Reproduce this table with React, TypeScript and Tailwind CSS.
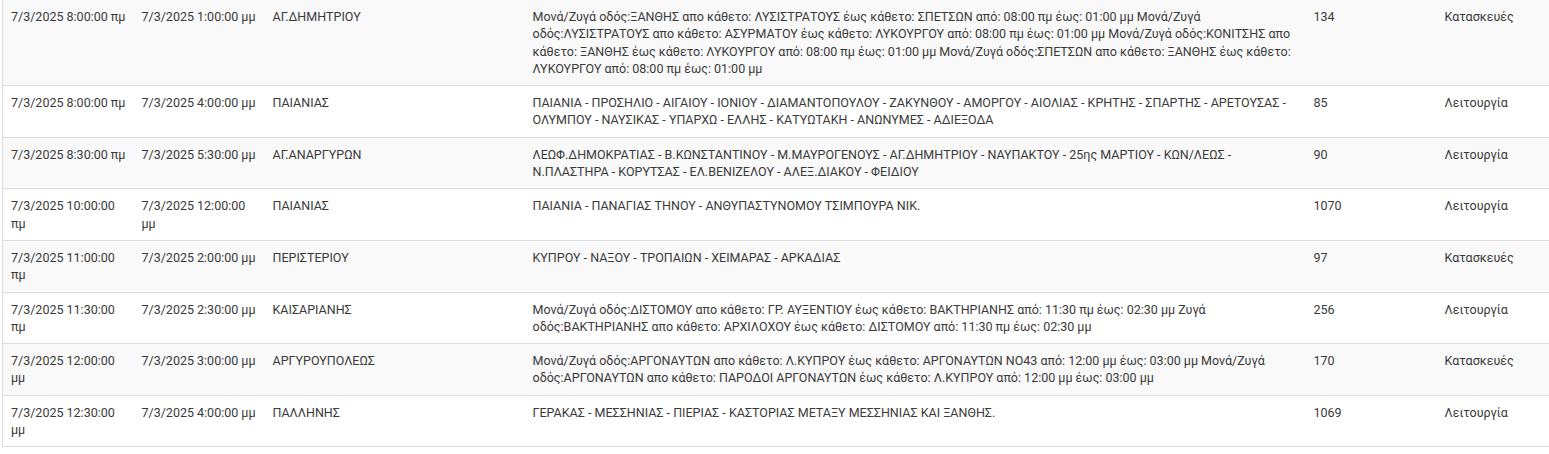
import React from 'react';

type Row = {
  start: string;
  end: string;
  area: string;
  streets: string;
  code: string;
  kind: string;
};

const rows: Row[] = [
  {
    start: '7/3/2025 8:00:00 πμ',
    end: '7/3/2025 1:00:00 μμ',
    area: 'ΑΓ.ΔΗΜΗΤΡΙΟΥ',
    streets:
      'Μονά/Ζυγά οδός:ΞΑΝΘΗΣ απο κάθετο: ΛΥΣΙΣΤΡΑΤΟΥΣ έως κάθετο: ΣΠΕΤΣΩΝ από: 08:00 πμ έως: 01:00 μμ Μονά/Ζυγά οδός:ΛΥΣΙΣΤΡΑΤΟΥΣ απο κάθετο: ΑΣΥΡΜΑΤΟΥ έως κάθετο: ΛΥΚΟΥΡΓΟΥ από: 08:00 πμ έως: 01:00 μμ Μονά/Ζυγά οδός:ΚΟΝΙΤΣΗΣ απο κάθετο: ΞΑΝΘΗΣ έως κάθετο: ΛΥΚΟΥΡΓΟΥ από: 08:00 πμ έως: 01:00 μμ Μονά/Ζυγά οδός:ΣΠΕΤΣΩΝ απο κάθετο: ΞΑΝΘΗΣ έως κάθετο: ΛΥΚΟΥΡΓΟΥ από: 08:00 πμ έως: 01:00 μμ',
    code: '134',
    kind: 'Κατασκευές',
  },
  {
    start: '7/3/2025 8:00:00 πμ',
    end: '7/3/2025 4:00:00 μμ',
    area: 'ΠΑΙΑΝΙΑΣ',
    streets:
      'ΠΑΙΑΝΙΑ - ΠΡΟΣΗΛΙΟ - ΑΙΓΑΙΟΥ - ΙΟΝΙΟΥ - ΔΙΑΜΑΝΤΟΠΟΥΛΟΥ - ΖΑΚΥΝΘΟΥ - ΑΜΟΡΓΟΥ - ΑΙΟΛΙΑΣ - ΚΡΗΤΗΣ - ΣΠΑΡΤΗΣ - ΑΡΕΤΟΥΣΑΣ - ΟΛΥΜΠΟΥ - ΝΑΥΣΙΚΑΣ - ΥΠΑΡΧΩ - ΕΛΛΗΣ - ΚΑΤΥΩΤΑΚΗ - ΑΝΩΝΥΜΕΣ - ΑΔΙΕΞΟΔΑ',
    code: '85',
    kind: 'Λειτουργία',
  },
  {
    start: '7/3/2025 8:30:00 πμ',
    end: '7/3/2025 5:30:00 μμ',
    area: 'ΑΓ.ΑΝΑΡΓΥΡΩΝ',
    streets:
      'ΛΕΩΦ.ΔΗΜΟΚΡΑΤΙΑΣ - Β.ΚΩΝΣΤΑΝΤΙΝΟΥ - Μ.ΜΑΥΡΟΓΕΝΟΥΣ - ΑΓ.ΔΗΜΗΤΡΙΟΥ - ΝΑΥΠΑΚΤΟΥ - 25ης ΜΑΡΤΙΟΥ - ΚΩΝ/ΛΕΩΣ - Ν.ΠΛΑΣΤΗΡΑ - ΚΟΡΥΤΣΑΣ - ΕΛ.ΒΕΝΙΖΕΛΟΥ - ΑΛΕΞ.ΔΙΑΚΟΥ - ΦΕΙΔΙΟΥ',
    code: '90',
    kind: 'Λειτουργία',
  },
  {
    start: '7/3/2025 10:00:00 πμ',
    end: '7/3/2025 12:00:00 μμ',
    area: 'ΠΑΙΑΝΙΑΣ',
    streets: 'ΠΑΙΑΝΙΑ - ΠΑΝΑΓΙΑΣ ΤΗΝΟΥ - ΑΝΘΥΠΑΣΤΥΝΟΜΟΥ ΤΣΙΜΠΟΥΡΑ ΝΙΚ.',
    code: '1070',
    kind: 'Λειτουργία',
  },
  {
    start: '7/3/2025 11:00:00 πμ',
    end: '7/3/2025 2:00:00 μμ',
    area: 'ΠΕΡΙΣΤΕΡΙΟΥ',
    streets: 'ΚΥΠΡΟΥ - ΝΑΞΟΥ - ΤΡΟΠΑΙΩΝ - ΧΕΙΜΑΡΑΣ - ΑΡΚΑΔΙΑΣ',
    code: '97',
    kind: 'Κατασκευές',
  },
  {
    start: '7/3/2025 11:30:00 πμ',
    end: '7/3/2025 2:30:00 μμ',
    area: 'ΚΑΙΣΑΡΙΑΝΗΣ',
    streets:
      'Μονά/Ζυγά οδός:ΔΙΣΤΟΜΟΥ απο κάθετο: ΓΡ. ΑΥΞΕΝΤΙΟΥ έως κάθετο: ΒΑΚΤΗΡΙΑΝΗΣ από: 11:30 πμ έως: 02:30 μμ Ζυγά οδός:ΒΑΚΤΗΡΙΑΝΗΣ απο κάθετο: ΑΡΧΙΛΟΧΟΥ έως κάθετο: ΔΙΣΤΟΜΟΥ από: 11:30 πμ έως: 02:30 μμ',
    code: '256',
    kind: 'Λειτουργία',
  },
  {
    start: '7/3/2025 12:00:00 μμ',
    end: '7/3/2025 3:00:00 μμ',
    area: 'ΑΡΓΥΡΟΥΠΟΛΕΩΣ',
    streets:
      'Μονά/Ζυγά οδός:ΑΡΓΟΝΑΥΤΩΝ απο κάθετο: Λ.ΚΥΠΡΟΥ έως κάθετο: ΑΡΓΟΝΑΥΤΩΝ ΝΟ43 από: 12:00 μμ έως: 03:00 μμ Μονά/Ζυγά οδός:ΑΡΓΟΝΑΥΤΩΝ απο κάθετο: ΠΑΡΟΔΟΙ ΑΡΓΟΝΑΥΤΩΝ έως κάθετο: Λ.ΚΥΠΡΟΥ από: 12:00 μμ έως: 03:00 μμ',
    code: '170',
    kind: 'Κατασκευές',
  },
  {
    start: '7/3/2025 12:30:00 μμ',
    end: '7/3/2025 4:00:00 μμ',
    area: 'ΠΑΛΛΗΝΗΣ',
    streets: 'ΓΕΡΑΚΑΣ - ΜΕΣΣΗΝΙΑΣ - ΠΙΕΡΙΑΣ - ΚΑΣΤΟΡΙΑΣ ΜΕΤΑΞΥ ΜΕΣΣΗΝΙΑΣ ΚΑΙ ΞΑΝΘΗΣ.',
    code: '1069',
    kind: 'Λειτουργία',
  },
];

const cell = 'px-2 py-2 align-top border-t border-[#dddddd]';

export default function App() {
  return (
    <div className="w-[1549px] bg-white pl-[2px]" style={{ fontFamily: 'Roboto, "Noto Sans", sans-serif' }}>
      <table className="w-full table-fixed border-collapse -mt-px border-l border-b border-[#dddddd] text-[12.5px] leading-[17.3px] text-[#3a3a3a]">
        <colgroup>
          <col className="w-[131px]" />
          <col className="w-[131px]" />
          <col className="w-[260px]" />
          <col className="w-[781px]" />
          <col className="w-[131px]" />
          <col />
        </colgroup>
        <tbody>
          {rows.map((r, i) => (
            <tr key={i} className={i % 2 === 0 ? 'bg-[#f9f9f9]' : 'bg-white'}>
              <td className={cell}>{r.start}</td>
              <td className={`${cell} pr-1`}>{r.end}</td>
              <td className={cell}>{r.area}</td>
              <td className={cell}>{r.streets}</td>
              <td className={cell}>{r.code}</td>
              <td className={cell}>{r.kind}</td>
            </tr>
          ))}
        </tbody>
      </table>
    </div>
  );
}
